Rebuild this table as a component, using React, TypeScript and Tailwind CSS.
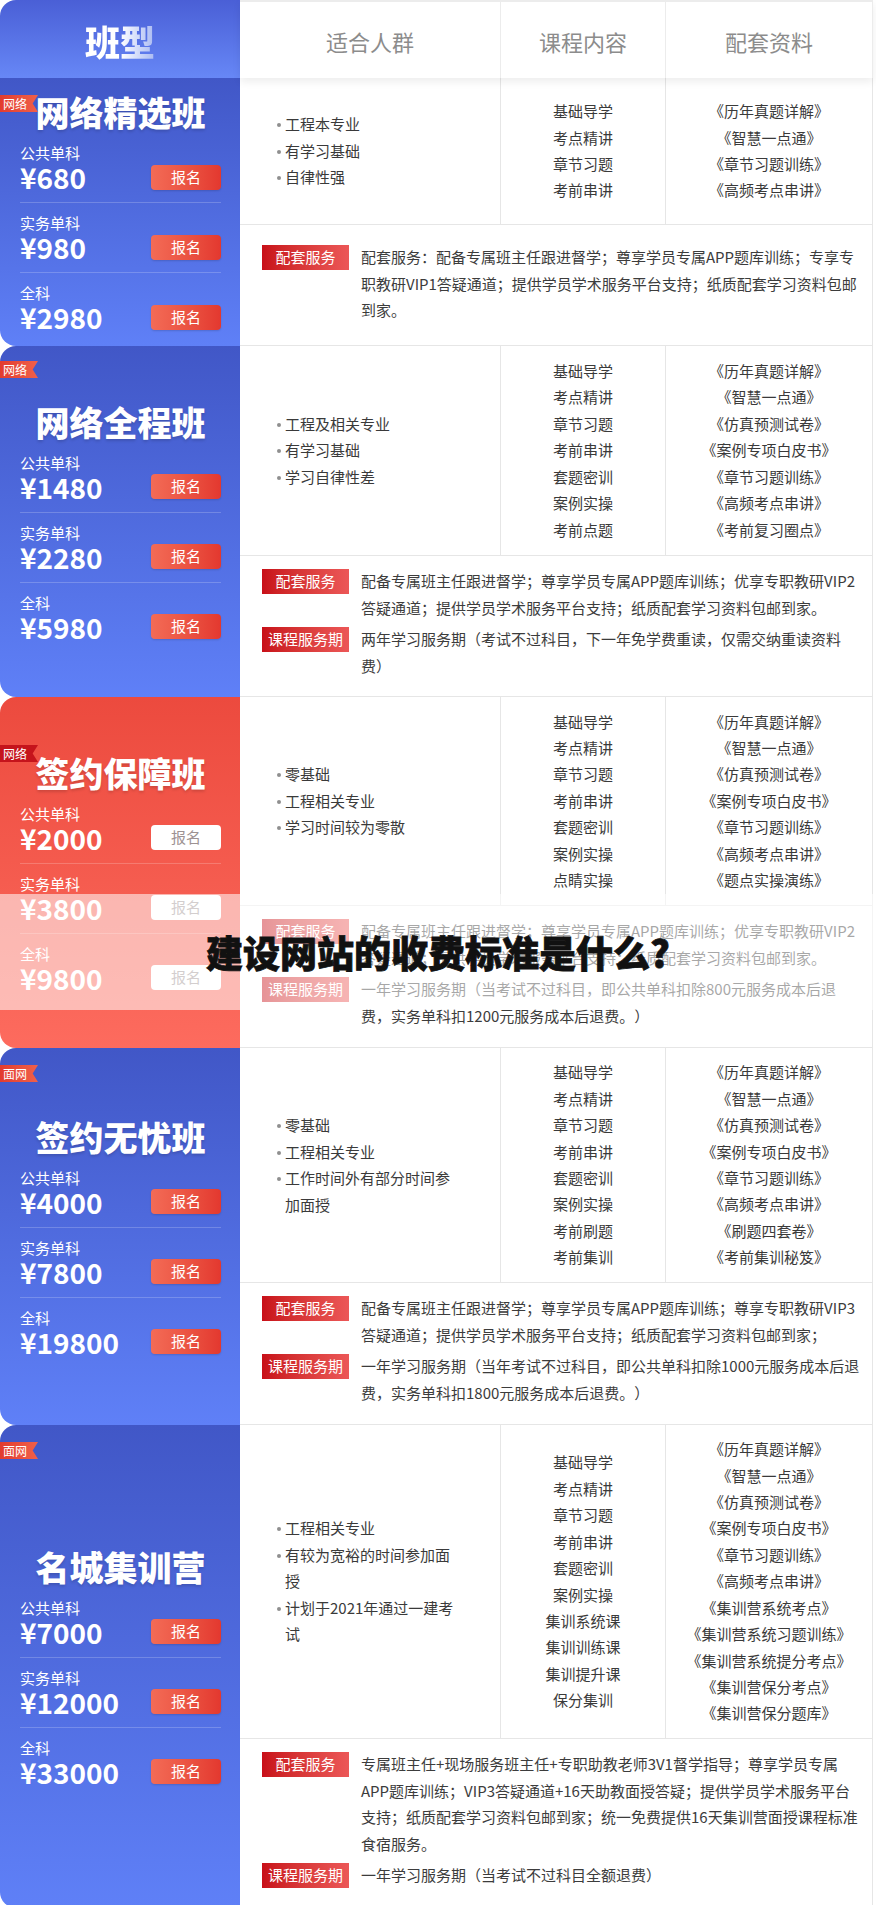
import React from 'react';

type Service = { label: string; text: string };

type Section = {
  tag: string;
  tagTop: string;
  title: string;
  red: boolean;
  rounded: string;
  prices: [string, string][];
  suits: string[];
  courses: string[];
  books: string[];
  services: Service[];
  upperH: string;
  serviceCls: string;
};

const sections: Section[] = [
  {
    tag: '网络',
    tagTop: 'top-[17px]',
    title: '网络精选班',
    red: false,
    rounded: 'rounded-bl-[16px]',
    prices: [['公共单科', '¥680'], ['实务单科', '¥980'], ['全科', '¥2980']],
    suits: ['工程本专业', '有学习基础', '自律性强'],
    courses: ['基础导学', '考点精讲', '章节习题', '考前串讲'],
    books: ['《历年真题详解》', '《智慧一点通》', '《章节习题训练》', '《高频考点串讲》'],
    services: [
      {
        label: '配套服务',
        text: '配套服务：配备专属班主任跟进督学；尊享学员专属APP题库训练；专享专职教研VIP1答疑通道；提供学员学术服务平台支持；纸质配套学习资料包邮到家。',
      },
    ],
    upperH: 'h-[147px]',
    serviceCls: 'h-[120px] pt-[19px]',
  },
  {
    tag: '网络',
    tagTop: 'top-[15px]',
    title: '网络全程班',
    red: false,
    rounded: 'rounded-l-[16px]',
    prices: [['公共单科', '¥1480'], ['实务单科', '¥2280'], ['全科', '¥5980']],
    suits: ['工程及相关专业', '有学习基础', '学习自律性差'],
    courses: ['基础导学', '考点精讲', '章节习题', '考前串讲', '套题密训', '案例实操', '考前点题'],
    books: ['《历年真题详解》', '《智慧一点通》', '《仿真预测试卷》', '《案例专项白皮书》', '《章节习题训练》', '《高频考点串讲》', '《考前复习圈点》'],
    services: [
      {
        label: '配套服务',
        text: '配备专属班主任跟进督学；尊享学员专属APP题库训练；优享专职教研VIP2答疑通道；提供学员学术服务平台支持；纸质配套学习资料包邮到家。',
      },
      {
        label: '课程服务期',
        text: '两年学习服务期（考试不过科目，下一年免学费重读，仅需交纳重读资料费）',
      },
    ],
    upperH: 'h-[210px]',
    serviceCls: 'h-[140px] pt-[12px]',
  },
  {
    tag: '网络',
    tagTop: 'top-[48px]',
    title: '签约保障班',
    red: true,
    rounded: 'rounded-l-[16px]',
    prices: [['公共单科', '¥2000'], ['实务单科', '¥3800'], ['全科', '¥9800']],
    suits: ['零基础', '工程相关专业', '学习时间较为零散'],
    courses: ['基础导学', '考点精讲', '章节习题', '考前串讲', '套题密训', '案例实操', '点睛实操'],
    books: ['《历年真题详解》', '《智慧一点通》', '《仿真预测试卷》', '《案例专项白皮书》', '《章节习题训练》', '《高频考点串讲》', '《题点实操演练》'],
    services: [
      {
        label: '配套服务',
        text: '配备专属班主任跟进督学；尊享学员专属APP题库训练；优享专职教研VIP2答疑通道；提供学员学术服务平台支持；纸质配套学习资料包邮到家。',
      },
      {
        label: '课程服务期',
        text: '一年学习服务期（当考试不过科目，即公共单科扣除800元服务成本后退费，实务单科扣1200元服务成本后退费。）',
      },
    ],
    upperH: 'h-[209px]',
    serviceCls: 'h-[141px] pt-[12px]',
  },
  {
    tag: '面网',
    tagTop: 'top-[17px]',
    title: '签约无忧班',
    red: false,
    rounded: 'rounded-l-[16px]',
    prices: [['公共单科', '¥4000'], ['实务单科', '¥7800'], ['全科', '¥19800']],
    suits: ['零基础', '工程相关专业', '工作时间外有部分时间参加面授'],
    courses: ['基础导学', '考点精讲', '章节习题', '考前串讲', '套题密训', '案例实操', '考前刷题', '考前集训'],
    books: ['《历年真题详解》', '《智慧一点通》', '《仿真预测试卷》', '《案例专项白皮书》', '《章节习题训练》', '《高频考点串讲》', '《刷题四套卷》', '《考前集训秘笈》'],
    services: [
      {
        label: '配套服务',
        text: '配备专属班主任跟进督学；尊享学员专属APP题库训练；尊享专职教研VIP3答疑通道；提供学员学术服务平台支持；纸质配套学习资料包邮到家；',
      },
      {
        label: '课程服务期',
        text: '一年学习服务期（当年考试不过科目，即公共单科扣除1000元服务成本后退费，实务单科扣1800元服务成本后退费。）',
      },
    ],
    upperH: 'h-[235px]',
    serviceCls: 'h-[141px] pt-[12px]',
  },
  {
    tag: '面网',
    tagTop: 'top-[17px]',
    title: '名城集训营',
    red: false,
    rounded: 'rounded-l-[16px]',
    prices: [['公共单科', '¥7000'], ['实务单科', '¥12000'], ['全科', '¥33000']],
    suits: ['工程相关专业', '有较为宽裕的时间参加面授', '计划于2021年通过一建考试'],
    courses: ['基础导学', '考点精讲', '章节习题', '考前串讲', '套题密训', '案例实操', '集训系统课', '集训训练课', '集训提升课', '保分集训'],
    books: [
      '《历年真题详解》',
      '《智慧一点通》',
      '《仿真预测试卷》',
      '《案例专项白皮书》',
      '《章节习题训练》',
      '《高频考点串讲》',
      '《集训营系统考点》',
      '《集训营系统习题训练》',
      '《集训营系统提分考点》',
      '《集训营保分考点》',
      '《集训营保分题库》',
    ],
    services: [
      {
        label: '配套服务',
        text: '专属班主任+现场服务班主任+专职助教老师3V1督学指导；尊享学员专属APP题库训练；VIP3答疑通道+16天助教面授答疑；提供学员学术服务平台支持；纸质配套学习资料包邮到家；统一免费提供16天集训营面授课程标准食宿服务。',
      },
      {
        label: '课程服务期',
        text: '一年学习服务期（当考试不过科目全额退费）',
      },
    ],
    upperH: 'h-[314px]',
    serviceCls: 'h-[168px] pt-[12px]',
  },
];

const Tag = ({ text, top, red }: { text: string; top: string; red: boolean }) => (
  <div
    className={`absolute left-0 ${top} h-[17px] w-[38px] pl-[3px] text-[12px] leading-[17px] text-white [clip-path:polygon(0_0,100%_0,86%_50%,100%_100%,0_100%)] ${
      red ? 'bg-[#c5141c]' : 'bg-gradient-to-r from-[#e23b2e] to-[#f0604a]'
    }`}
  >
    {text}
  </div>
);

const PricePanel = ({ s }: { s: Section }) => (
  <div
    className={`relative flex w-[240px] shrink-0 flex-col justify-center pt-[8px] pl-[20px] pr-[19px] bg-gradient-to-b ${s.rounded} ${
      s.red ? 'from-[#ec4a3e] to-[#fd6b5e]' : 'from-[#4157c7] to-[#5f80f7]'
    }`}
  >
    <Tag text={s.tag} top={s.tagTop} red={s.red} />
    <div className="mb-[1px] pt-[2px] text-center text-[34px] font-black leading-[40px] text-white [text-shadow:0_2px_3px_rgba(0,0,0,0.15)]">
      {s.title}
    </div>
    {s.prices.map(([label, price], i) => (
      <div key={label} className={`pt-[11px] pb-[10px] ${i > 0 ? 'border-t border-white/20' : ''}`}>
        <div className="text-[15px] leading-[18px] text-white">{label}</div>
        <div className="flex items-center justify-between">
          <span className="text-[28px] font-bold leading-[30px] text-white">{price}</span>
          <span
            className={`flex h-[25px] w-[70px] items-center justify-center rounded-[4px] text-[15px] ${
              s.red
                ? 'bg-white text-[#9d9292]'
                : 'bg-gradient-to-r from-[#f36b56] to-[#e3382f] text-white shadow-[0_1px_2px_rgba(0,0,0,0.15)]'
            }`}
          >
            报名
          </span>
        </div>
      </div>
    ))}
  </div>
);

const SectionRow = ({ s }: { s: Section }) => (
  <div className="flex">
    <PricePanel s={s} />
    <div className="flex w-[633px] flex-col border-r border-b border-[#e6e6e6]">
      <div className={`flex ${s.upperH} border-b border-[#e6e6e6]`}>
        <div className="flex w-[260px] flex-col justify-center pl-[37px] pr-[43px]">
          {s.suits.map((t) => (
            <div key={t} className="flex items-start text-[15px] leading-[26.5px] text-[#3a3a3a]">
              <span className="mt-[12px] mr-[4px] h-[4px] w-[4px] shrink-0 rounded-full bg-[#8f8f8f]" />
              <span>{t}</span>
            </div>
          ))}
        </div>
        <div className="flex w-[165px] flex-col items-center justify-center border-l border-[#e6e6e6]">
          {s.courses.map((t) => (
            <div key={t} className="text-[15px] leading-[26.4px] text-[#3a3a3a]">
              {t}
            </div>
          ))}
        </div>
        <div className="flex flex-1 flex-col items-center justify-center border-l border-[#e6e6e6]">
          {s.books.map((t) => (
            <div key={t} className="text-[15px] leading-[26.4px] text-[#3a3a3a]">
              {t}
            </div>
          ))}
        </div>
      </div>
      <div className={`flex flex-col gap-[5px] pl-[22px] ${s.serviceCls}`}>
        {s.services.map((sv) => (
          <div key={sv.label} className="flex items-start">
            <span className="mt-[1px] flex h-[25px] w-[87px] shrink-0 items-center justify-center bg-gradient-to-r from-[#c80e18] to-[#ec5757] text-[15px] text-white">
              {sv.label}
            </span>
            <p className="ml-[12px] w-[503px] text-[15px] leading-[26.5px] text-[#3c3c3c]">{sv.text}</p>
          </div>
        ))}
      </div>
    </div>
  </div>
);

export default function App() {
  return (
    <div className="relative min-h-[1905px] w-[876px] bg-white font-['Noto_Sans_CJK_SC',sans-serif] [text-spacing-trim:space-all]">
      <div className="relative z-10 flex">
        <div className="flex h-[78px] w-[240px] shrink-0 items-center justify-center rounded-tl-[16px] bg-gradient-to-b from-[#4a5fd6] to-[#6787f6]">
          <span className="bg-gradient-to-r from-white via-white to-[#a9b9f2] bg-clip-text pt-[4px] text-[35px] font-black leading-[40px] text-transparent">
            班型
          </span>
        </div>
        <div className="flex h-[78px] w-[633px] border-t-2 border-r border-[#ececec] bg-white shadow-[0_4px_8px_rgba(0,0,0,0.07)]">
          <div className="flex w-[260px] items-center justify-center pt-[2px] text-[22px] text-[#8c8c8c]">适合人群</div>
          <div className="flex w-[165px] items-center justify-center border-l border-[#ececec] pt-[2px] text-[22px] text-[#8c8c8c]">
            课程内容
          </div>
          <div className="flex flex-1 items-center justify-center border-l border-[#ececec] pt-[2px] text-[22px] text-[#8c8c8c]">
            配套资料
          </div>
        </div>
      </div>
      {sections.map((s) => (
        <SectionRow key={s.title} s={s} />
      ))}
      <div className="absolute left-0 top-[894px] z-20 flex h-[116px] w-full items-center justify-center bg-white/55">
        <h1 className="text-[37px] font-black leading-[44px] text-[#111] [-webkit-text-stroke:0.8px_#111]">
          建设网站的收费标准是什么?
        </h1>
      </div>
    </div>
  );
}
